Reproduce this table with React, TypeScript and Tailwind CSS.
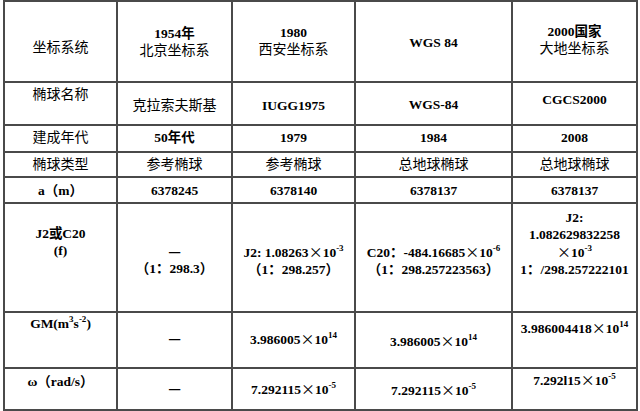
const font = "font-['Liberation_Serif','Noto_Sans_CJK_SC',serif]";

type CellProps = {
  pt: string;
  children: React.ReactNode;
};

function Cell({ pt, children }: CellProps) {
  return (
    <td className="border-2 border-[#4a4a4a] p-0 align-top">
      <div className={`${pt} flex flex-col items-center text-center leading-[17px]`}>{children}</div>
    </td>
  );
}

function Sup({ children }: { children: React.ReactNode }) {
  return <sup className="relative -top-[1px] text-[9px] leading-none align-super">{children}</sup>;
}

// full-width times sign as in the source table
function X() {
  return <span className="font-['Noto_Sans_CJK_SC',sans-serif] font-normal text-[14px]">×</span>;
}

function Dash() {
  return <span className="font-['Noto_Sans_CJK_SC',sans-serif] font-bold text-[14px]">—</span>;
}

const cjk = "font-normal text-[14px]";
const b = "font-bold";

export default function App() {
  return (
    <div className={`w-[640px] h-[411px] overflow-hidden bg-white text-black text-[13.5px] ${font}`}>
      <table className="ml-[3px] w-[635px] table-fixed border-collapse">
        <colgroup>
          <col className="w-[113px]" />
          <col className="w-[115px]" />
          <col className="w-[123px]" />
          <col className="w-[157px]" />
          <col className="w-[125px]" />
        </colgroup>
        <tbody>
          <tr className="h-[81px]">
            <Cell pt="pt-[37px]">
              <span className={cjk}>坐标系统</span>
            </Cell>
            <Cell pt="pt-[23px]">
              <span className={b}>1954年</span>
              <span className={cjk}>北京坐标系</span>
            </Cell>
            <Cell pt="pt-[22px]">
              <span className={b}>1980</span>
              <span className={cjk}>西安坐标系</span>
            </Cell>
            <Cell pt="pt-[32px]">
              <span className={b}>WGS 84</span>
            </Cell>
            <Cell pt="pt-[21px]">
              <span className={b}>2000国家</span>
              <span className={cjk}>大地坐标系</span>
            </Cell>
          </tr>
          <tr className="h-[43px]">
            <Cell pt="pt-[3px]">
              <span className={cjk}>椭球名称</span>
            </Cell>
            <Cell pt="pt-[14px]">
              <span className={cjk}>克拉索夫斯基</span>
            </Cell>
            <Cell pt="pt-[14px]">
              <span className={b}>IUGG1975</span>
            </Cell>
            <Cell pt="pt-[13px]">
              <span className={b}>WGS-84</span>
            </Cell>
            <Cell pt="pt-[8px]">
              <span className={b}>CGCS2000</span>
            </Cell>
          </tr>
          <tr className="h-[27px]">
            <Cell pt="pt-[3px]">
              <span className={cjk}>建成年代</span>
            </Cell>
            <Cell pt="pt-[3px]">
              <span className={b}>50年代</span>
            </Cell>
            <Cell pt="pt-[3px]">
              <span className={b}>1979</span>
            </Cell>
            <Cell pt="pt-[3px]">
              <span className={b}>1984</span>
            </Cell>
            <Cell pt="pt-[3px]">
              <span className={b}>2008</span>
            </Cell>
          </tr>
          <tr className="h-[25px]">
            <Cell pt="pt-[3px]">
              <span className={cjk}>椭球类型</span>
            </Cell>
            <Cell pt="pt-[3px]">
              <span className={cjk}>参考椭球</span>
            </Cell>
            <Cell pt="pt-[3px]">
              <span className={cjk}>参考椭球</span>
            </Cell>
            <Cell pt="pt-[3px]">
              <span className={cjk}>总地球椭球</span>
            </Cell>
            <Cell pt="pt-[3px]">
              <span className={cjk}>总地球椭球</span>
            </Cell>
          </tr>
          <tr className="h-[26px]">
            <Cell pt="pt-[4px]">
              <span className={b}>a（m）</span>
            </Cell>
            <Cell pt="pt-[4px]">
              <span className={b}>6378245</span>
            </Cell>
            <Cell pt="pt-[4px]">
              <span className={b}>6378140</span>
            </Cell>
            <Cell pt="pt-[4px]">
              <span className={b}>6378137</span>
            </Cell>
            <Cell pt="pt-[4px]">
              <span className={b}>6378137</span>
            </Cell>
          </tr>
          <tr className="h-[109px]">
            <Cell pt="pt-[21px]">
              <span className={b}>J2或C20</span>
              <span className={b}>(f)</span>
            </Cell>
            <Cell pt="pt-[39px]">
              <Dash />
              <span className={b}>（1：298.3）</span>
            </Cell>
            <Cell pt="pt-[39px]">
              <span className={`${b} whitespace-nowrap`}>
                J2: 1.08263<X />10<Sup>-3</Sup>
              </span>
              <span className={b}>（1：298.257）</span>
            </Cell>
            <Cell pt="pt-[39px]">
              <span className={`${b} whitespace-nowrap`}>
                C20：-484.16685<X />10<Sup>-6</Sup>
              </span>
              <span className={`${b} whitespace-nowrap`}>（1：298.257223563）</span>
            </Cell>
            <Cell pt="pt-[5px]">
              <span className={b}>J2:</span>
              <span className={b}>1.082629832258</span>
              <span className={b}>
                <X />10<Sup>-3</Sup>
              </span>
              <span className={`${b} whitespace-nowrap`}>1：/298.257222101</span>
            </Cell>
          </tr>
          <tr className="h-[56px]">
            <Cell pt="pt-[2px]">
              <span className={b}>
                GM(m<Sup>3</Sup>s<Sup>-2</Sup>)
              </span>
            </Cell>
            <Cell pt="pt-[17px]">
              <Dash />
            </Cell>
            <Cell pt="pt-[17px]">
              <span className={b}>
                3.986005<X />10<Sup>14</Sup>
              </span>
            </Cell>
            <Cell pt="pt-[19px]">
              <span className={b}>
                3.986005<X />10<Sup>14</Sup>
              </span>
            </Cell>
            <Cell pt="pt-[6px]">
              <span className={`${b} whitespace-nowrap`}>
                3.986004418<X />10<Sup>14</Sup>
              </span>
            </Cell>
          </tr>
          <tr className="h-[42px]">
            <Cell pt="pt-[4px]">
              <span className={b}>ω（rad/s）</span>
            </Cell>
            <Cell pt="pt-[11px]">
              <Dash />
            </Cell>
            <Cell pt="pt-[11px]">
              <span className={b}>
                7.292115<X />10<Sup>-5</Sup>
              </span>
            </Cell>
            <Cell pt="pt-[12px]">
              <span className={b}>
                7.292115<X />10<Sup>-5</Sup>
              </span>
            </Cell>
            <Cell pt="pt-[2px]">
              <span className={b}>
                7.292l15<X />10<Sup>-5</Sup>
              </span>
            </Cell>
          </tr>
        </tbody>
      </table>
    </div>
  );
}
